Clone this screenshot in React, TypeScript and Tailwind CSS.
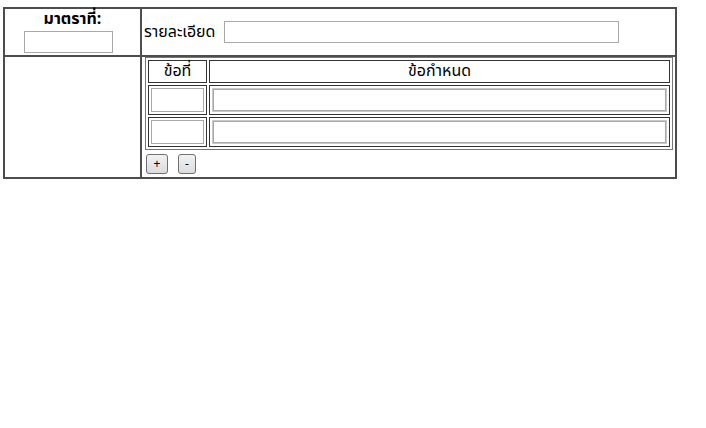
import React, { useState } from "react";

const font = { fontFamily: 'Tahoma, "Noto Sans Thai", "Noto Sans", "Liberation Sans", sans-serif' };

type Row = { no: string; text: string };

const RuleRow: React.FC<{ row: Row }> = ({ row }) => (
  <tr>
    <td className="border border-[#333] p-[2px]">
      <input
        defaultValue={row.no}
        className="block w-[53px] h-[24px] border border-[#a9a9a9] bg-white outline-none"
      />
    </td>
    <td className="border border-[#333] p-[2px]">
      <input
        defaultValue={row.text}
        className="block w-full h-[24px] border-2 border-[#c8c8c8] outline outline-1 outline-[#a9a9a9] -outline-offset-2 bg-white"
      />
    </td>
  </tr>
);

export default function App() {
  const [rows, setRows] = useState<Row[]>([
    { no: "", text: "" },
    { no: "", text: "" },
  ]);

  const addRow = () => setRows([...rows, { no: "", text: "" }]);
  const removeRow = () => rows.length > 1 && setRows(rows.slice(0, -1));

  return (
    <div className="w-[706px] h-[428px] bg-white pt-[7px] pl-[3px] text-black" style={font}>
      <table className="w-[674px] border-collapse border-2 border-[#4d4d4d]">
        <tbody>
          {/* HEADER ROW */}
          <tr className="h-[48px]">
            <td className="w-[137px] border-2 border-[#4d4d4d] align-top text-center pt-0">
              <div className="font-bold text-[16px] leading-[20px]">มาตราที่:</div>
              <input className="block mt-[2px] ml-[19px] w-[89px] h-[22px] border border-[#a9a9a9] bg-white" />
            </td>
            <td className="border-2 border-[#4d4d4d] align-middle pl-[2px]">
              <div className="flex items-center gap-[9px] text-[16px]">
                <span>รายละเอียด</span>
                <input className="w-[395px] h-[22px] border border-[#a9a9a9] bg-white" />
              </div>
            </td>
          </tr>

          {/* BODY ROW */}
          <tr>
            <td className="border-2 border-[#4d4d4d]"></td>
            <td className="border-2 border-[#4d4d4d] pt-0 pl-[3px] pr-[2px] pb-[3px] align-top">
              <table className="w-full border-separate border-spacing-[2px] border border-[#777] text-[16px]">
                <thead>
                  <tr>
                    <th className="w-[59px] border border-[#333] font-normal h-[23px] leading-[19px] p-0">ข้อที่</th>
                    <th className="border border-[#333] font-normal leading-[19px] p-0">ข้อกำหนด</th>
                  </tr>
                </thead>
                <tbody>
                  {rows.map((r, i) => (
                    <RuleRow key={i} row={r} />
                  ))}
                </tbody>
              </table>
              <div className="flex gap-[10px] mt-[4px] ml-[1px]">
                <button
                  onClick={addRow}
                  className="w-[22px] h-[20px] text-[12px] leading-none rounded-[3px] border border-[#707070] bg-gradient-to-b from-[#f2f2f2] to-[#dcdcdc]"
                >
                  +
                </button>
                <button
                  onClick={removeRow}
                  className="w-[18px] h-[20px] text-[12px] leading-none rounded-[3px] border border-[#707070] bg-gradient-to-b from-[#f2f2f2] to-[#dcdcdc]"
                >
                  -
                </button>
              </div>
            </td>
          </tr>
        </tbody>
      </table>
    </div>
  );
}
